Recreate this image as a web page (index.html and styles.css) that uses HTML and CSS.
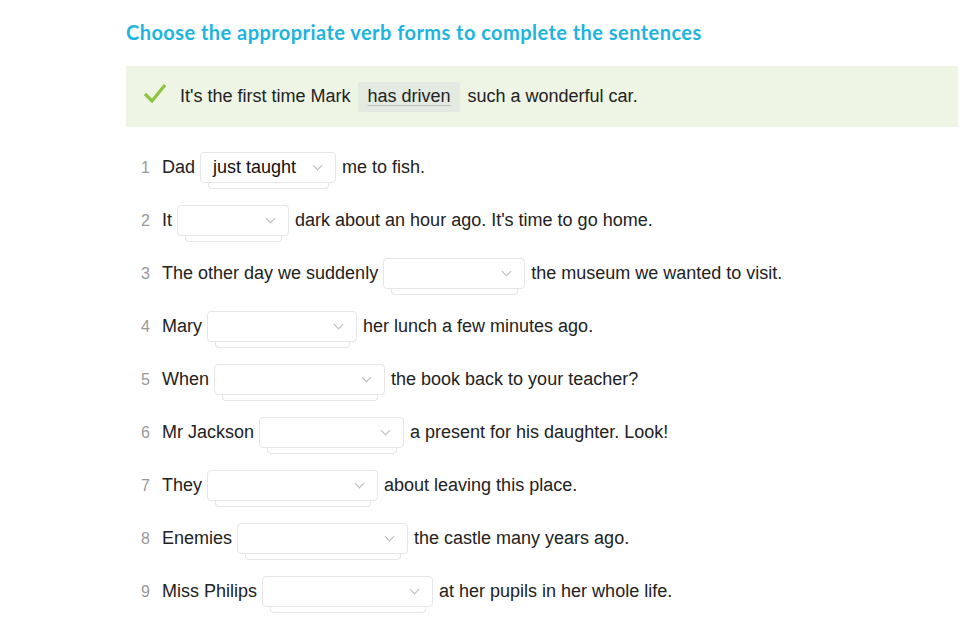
FILE: index.html
```html
<!DOCTYPE html>
<html lang="en">
<head>
    <meta charset="UTF-8">
    <title>Verb forms</title>
    <link rel="stylesheet" href="styles.css">
</head>
<body>
    <div class="page">
        <h1 class="title">Choose the appropriate verb forms to complete the sentences</h1>

        <!-- exemplo respondido -->
        <div class="example">
            <svg class="check" width="22" height="20" viewBox="0 0 22 20">
                <path d="M1 11 L8 18 L21 2" fill="none" stroke="#8cc63f" stroke-width="3.2"/>
            </svg>
            <span>It's the first time Mark</span>
            <span class="answer"><u>has driven</u></span>
            <span>such a wonderful car.</span>
        </div>

        <ol class="list">
            <li class="row"><span class="num">1</span><span>Dad</span>
                <span class="sel w136"><span class="val">just taught</span><span class="arrow"></span></span>
                <span>me to fish.</span></li>
            <li class="row"><span class="num">2</span><span>It</span>
                <span class="sel w112"><span class="val"></span><span class="arrow"></span></span>
                <span>dark about an hour ago. It's time to go home.</span></li>
            <li class="row"><span class="num">3</span><span>The other day we suddenly</span>
                <span class="sel w142"><span class="val"></span><span class="arrow"></span></span>
                <span>the museum we wanted to visit.</span></li>
            <li class="row"><span class="num">4</span><span>Mary</span>
                <span class="sel w150"><span class="val"></span><span class="arrow"></span></span>
                <span>her lunch a few minutes ago.</span></li>
            <li class="row"><span class="num">5</span><span>When</span>
                <span class="sel w171"><span class="val"></span><span class="arrow"></span></span>
                <span>the book back to your teacher?</span></li>
            <li class="row"><span class="num">6</span><span>Mr Jackson</span>
                <span class="sel w145"><span class="val"></span><span class="arrow"></span></span>
                <span>a present for his daughter. Look!</span></li>
            <li class="row"><span class="num">7</span><span>They</span>
                <span class="sel w171"><span class="val"></span><span class="arrow"></span></span>
                <span>about leaving this place.</span></li>
            <li class="row"><span class="num">8</span><span>Enemies</span>
                <span class="sel w171"><span class="val"></span><span class="arrow"></span></span>
                <span>the castle many years ago.</span></li>
            <li class="row"><span class="num">9</span><span>Miss Philips</span>
                <span class="sel w171"><span class="val"></span><span class="arrow"></span></span>
                <span>at her pupils in her whole life.</span></li>
        </ol>
    </div>
</body>
</html>
```

FILE: styles.css
```css
/* Estilos básicos */
* {
    margin: 0;
    padding: 0;
    box-sizing: border-box;
}

body {
    background-color: #fff;
    font-family: "Liberation Sans", Arial, sans-serif;
    color: #222;
}

.page {
    padding: 18px 11px 0 126px;
}

.title {
    font-family: Lato, "Open Sans", sans-serif;
    font-weight: bold;
    font-size: 20px;
    color: #1db4e0;
    line-height: 28px;
    letter-spacing: 0.45px;
}

.example {
    display: flex;
    align-items: center;
    gap: 8px;
    height: 61px;
    margin-top: 20px;
    padding-left: 18px;
    background-color: #eef5e4;
    font-size: 18px;
}

.check {
    margin-right: 6px;
    margin-top: -7px;
}

.answer {
    background-color: #e3eae1;
    padding: 4px 9px 5px;
    border-radius: 2px;
}

.answer u {
    text-decoration-color: #b9c2bb;
    text-underline-offset: 3px;
}

.list {
    list-style: none;
    margin-top: 14px;
}

.row {
    display: flex;
    align-items: center;
    gap: 5px;
    height: 53px;
    font-size: 18px;
}

.num {
    width: 31px;
    text-align: right;
    padding-right: 7px;
    color: #999;
    font-size: 16px;
}

.sel {
    position: relative;
    display: flex;
    align-items: center;
    justify-content: space-between;
    height: 31px;
    padding: 0 14px 0 12px;
    border: 1px solid #e6e6e6;
    border-radius: 4px;
    background-color: #fff;
    margin-right: 1px;
}

/* cartão de trás */
.sel::after {
    content: "";
    position: absolute;
    left: 7px;
    right: 6px;
    top: 6px;
    bottom: -7px;
    border: 1px solid #e6e6e6;
    border-top: none;
    border-radius: 0 0 4px 4px;
    z-index: -1;
}

.val {
    color: #111;
}

.arrow {
    width: 7px;
    height: 7px;
    border-right: 1.3px solid #bbb;
    border-bottom: 1.3px solid #bbb;
    transform: rotate(45deg);
    margin-top: -4px;
}

.w112 { width: 112px; }
.w136 { width: 136px; }
.w142 { width: 142px; }
.w145 { width: 145px; }
.w150 { width: 150px; }
.w171 { width: 171px; }
```
